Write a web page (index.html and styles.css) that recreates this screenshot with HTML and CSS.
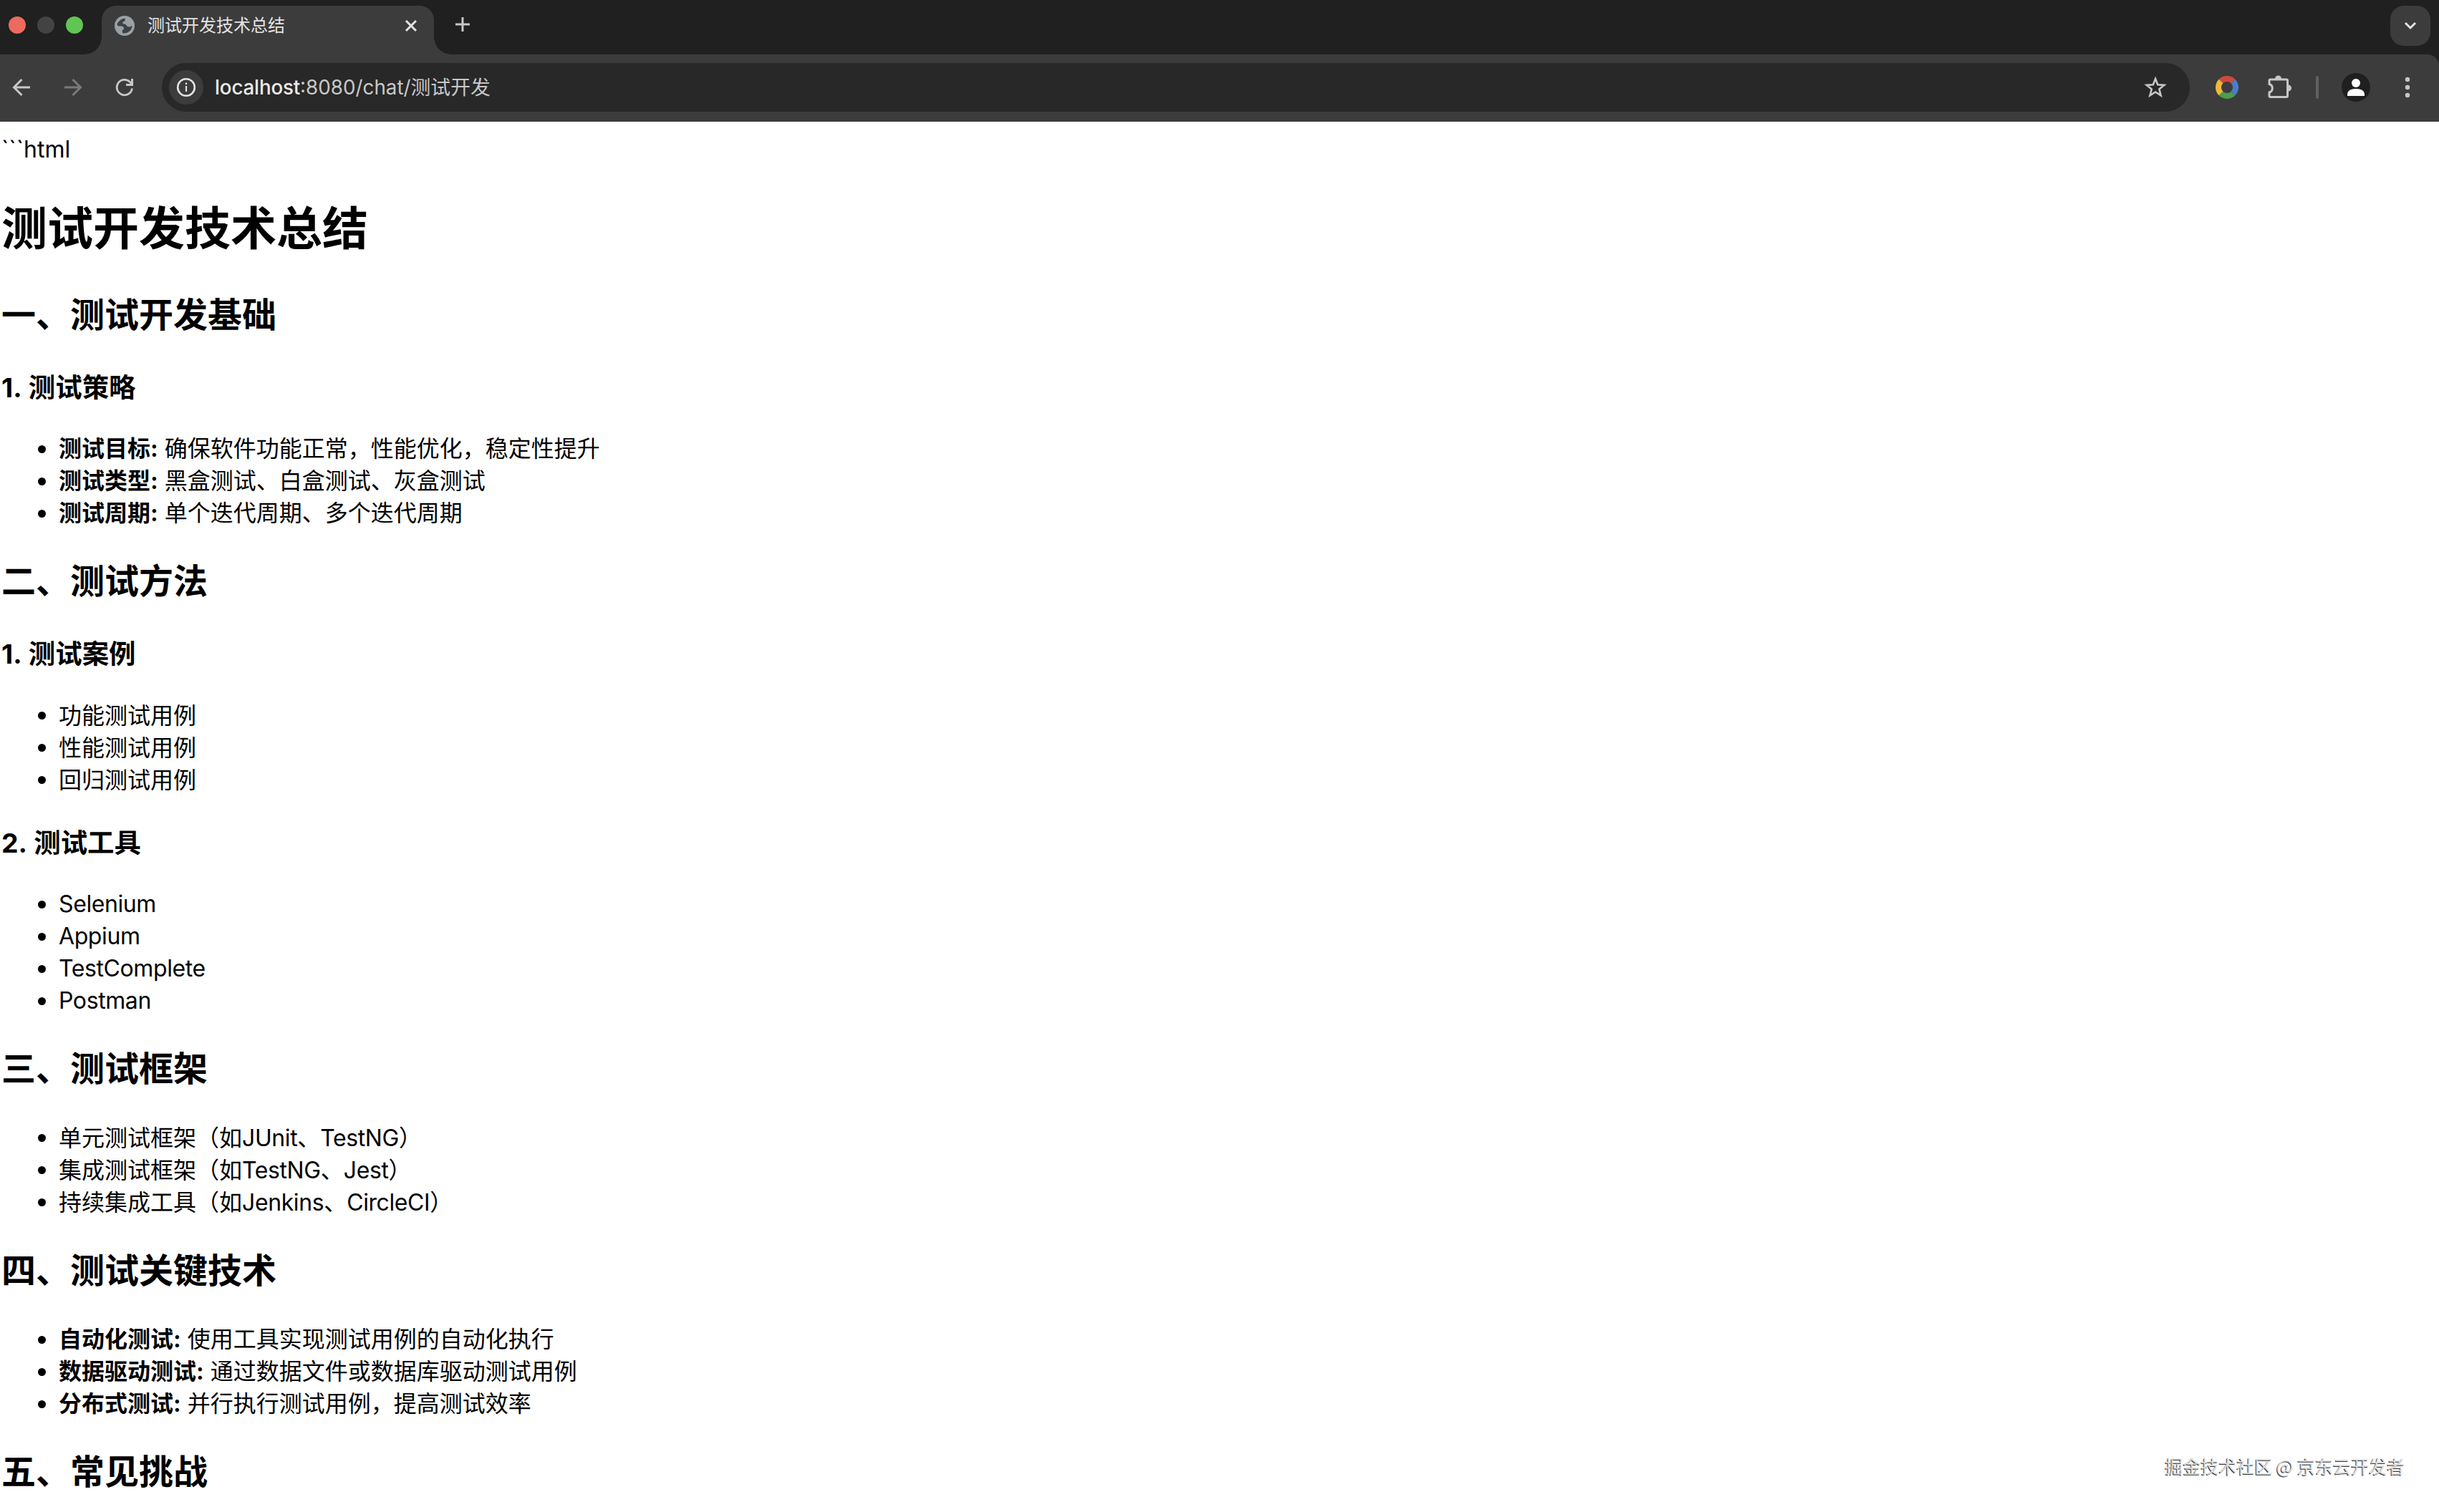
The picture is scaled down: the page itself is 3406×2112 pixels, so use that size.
FILE: index.html
```html
<!DOCTYPE html>
<html lang="zh-CN">
<head>
<meta charset="utf-8">
<title>测试开发技术总结</title>
<link rel="stylesheet" href="styles.css">
</head>
<body>
<div class="browser">
  <header class="tabstrip">
    <div class="lights"><i class="light red"></i><i class="light idle"></i><i class="light green"></i></div>
    <div class="tab">
      <svg class="favicon" width="28" height="28" viewBox="0 0 28 28"><circle cx="14" cy="14" r="14" fill="#9aa0a3"/><path d="M14 3.500Q8 4.500 4 10.500C3 13.500 4 14.500 8 14.500Q11.500 14 12.500 16Q14 19 11 20Q10 22 11.500 24.500Q17 25 21 21.500Q24.500 18 24.500 14L21 15.500Q17.500 16 16.500 13Q15 11.500 11.500 11Q10.500 9 13 8Q16 7 14 3.500Z" fill="#3a4348"/></svg>
      <span class="tab-title">测试开发技术总结</span>
      <svg class="close" width="18" height="18" viewBox="0 0 18 18"><path d="M2 2L16 16M16 2L2 16" stroke="#e3e3e3" stroke-width="3"/></svg>
    </div>
    <svg class="plus" width="22" height="22" viewBox="0 0 22 22"><path d="M11 1V21M1 11H21" stroke="#c7c7c7" stroke-width="3"/></svg>
    <div class="tab-search"><svg width="18" height="12" viewBox="0 0 18 12"><path d="M2 2L9 9L16 2" fill="none" stroke="#e3e3e3" stroke-width="3"/></svg></div>
  </header>
  <nav class="toolbar">
    <svg class="back" width="26" height="26" viewBox="0 0 26 26"><path d="M25 13H3M13.500 2L2.500 13L13.500 24" fill="none" stroke="#c7c7c7" stroke-width="3"/></svg>
    <svg class="forward" width="26" height="26" viewBox="0 0 26 26"><path d="M1 13H23M12.500 2L23.500 13L12.500 24" fill="none" stroke="#7b7b7b" stroke-width="3"/></svg>
    <svg class="reload" width="26" height="26" viewBox="0 0 26 26"><path d="M23.500 14.500A10.700 10.700 0 1 1 20.500 5.500L23 8" fill="none" stroke="#c7c7c7" stroke-width="2.800"/><path d="M23.500 1V9.500H15" fill="none" stroke="#c7c7c7" stroke-width="3"/></svg>
    <div class="omnibox">
      <span class="site-info"><svg width="28" height="28" viewBox="0 0 28 28"><circle cx="14" cy="14" r="11.800" fill="none" stroke="#e3e3e3" stroke-width="2.600"/><path d="M14 12V20M14 7.500V10" stroke="#e3e3e3" stroke-width="2.200"/></svg></span>
      <span class="url"><b class="host">localhost</b>:8080/chat/测试开发</span>
      <svg class="star" width="32" height="32" viewBox="0 0 32 32"><path d="M16 4L19.200 12.300L28.300 12.900L21.300 18.600L23.600 27.300L16 22.500L8.400 27.300L10.700 18.600L3.700 12.900L12.800 12.300Z" fill="none" stroke="#c7c7c7" stroke-width="2.600"/></svg>
    </div>
    <svg class="ring" width="32" height="32" viewBox="0 0 32 32" fill="none" stroke-width="8"><path d="M7.500 7.500A12 12 0 0 1 24.500 7.500" stroke="#d0493b"/><path d="M24.500 7.500A12 12 0 0 1 24.500 24.500" stroke="#4c7bc9"/><path d="M24.500 24.500A12 12 0 0 1 7.500 24.500" stroke="#4a9e4c"/><path d="M7.500 24.500A12 12 0 0 1 7.500 7.500" stroke="#ecb93c"/></svg>
    <svg class="puzzle" width="34" height="34" viewBox="0 0 34 34"><path d="M3.500 6H26A1.500 1.500 0 0 1 27.500 7.500V29A1.500 1.500 0 0 1 26 30.500H3.500A1.500 1.500 0 0 1 2 29V24A6 6 0 0 0 2 12.500V7.500A1.500 1.500 0 0 1 3.500 6Z" fill="none" stroke="#c7c7c7" stroke-width="3"/><path d="M10 5A4.500 4.500 0 0 1 19 5ZM28.500 13.500A4.500 4.500 0 0 1 28.500 22.500Z" fill="#c7c7c7"/></svg>
    <i class="divider"></i>
    <svg class="avatar" width="40" height="40" viewBox="0 0 40 40"><circle cx="20" cy="20" r="20" fill="#1f1f1f"/><circle cx="20" cy="14" r="6" fill="#fff"/><path d="M8 32V29Q9 22 20 22T32 29V32Z" fill="#fff"/></svg>
    <svg class="more" width="8" height="30" viewBox="0 0 8 30" fill="#c7c7c7"><circle cx="4" cy="4" r="3.200"/><circle cx="4" cy="15" r="3.200"/><circle cx="4" cy="26" r="3.200"/></svg>
  </nav>
</div>
<main class="page">
  <div class="fence">```html</div>
  <h1>测试开发技术总结</h1>
  <h2>一、测试开发基础</h2>
  <h3>1. 测试策略</h3>
  <ul>
    <li><strong>测试目标:</strong> 确保软件功能正常，性能优化，稳定性提升</li>
    <li><strong>测试类型:</strong> 黑盒测试、白盒测试、灰盒测试</li>
    <li><strong>测试周期:</strong> 单个迭代周期、多个迭代周期</li>
  </ul>
  <h2>二、测试方法</h2>
  <h3>1. 测试案例</h3>
  <ul>
    <li>功能测试用例</li>
    <li>性能测试用例</li>
    <li>回归测试用例</li>
  </ul>
  <h3>2. 测试工具</h3>
  <ul>
    <li><span class="latin">Selenium</span></li>
    <li><span class="latin">Appium</span></li>
    <li><span class="latin">TestComplete</span></li>
    <li><span class="latin">Postman</span></li>
  </ul>
  <h2>三、测试框架</h2>
  <ul>
    <li>单元测试框架（如<span class="latin">JUnit</span>、<span class="latin">TestNG</span>）</li>
    <li>集成测试框架（如<span class="latin">TestNG</span>、<span class="latin">Jest</span>）</li>
    <li>持续集成工具（如<span class="latin">Jenkins</span>、<span class="latin">CircleCI</span>）</li>
  </ul>
  <h2>四、测试关键技术</h2>
  <ul>
    <li><strong>自动化测试:</strong> 使用工具实现测试用例的自动化执行</li>
    <li><strong>数据驱动测试:</strong> 通过数据文件或数据库驱动测试用例</li>
    <li><strong>分布式测试:</strong> 并行执行测试用例，提高测试效率</li>
  </ul>
  <h2>五、常见挑战</h2>
</main>
<div class="watermark">掘金技术社区 @ 京东云开发者</div>
</body>
</html>
```
FILE: styles.css
```css
* { box-sizing: border-box; }
html, body { height: 2112px; overflow: hidden; }
body {
  margin: 0;
  position: relative;
  background: #fff;
  color: #000;
  font-family: Inter, "Noto Sans CJK SC", sans-serif;
  font-size: 32px;
  line-height: 45px;
}
svg { display: block; flex: none; }

.browser { height: 170px; background: #202020; }
.tabstrip { display: flex; height: 76px; padding: 8px 12px 0; }
.lights { display: flex; gap: 16px; padding-top: 15px; width: 130px; }
.light { width: 24px; height: 24px; border-radius: 50%; }
.red { background: #ed6a5e; }
.idle { background: #434343; }
.green { background: #61c554; }
.tab {
  position: relative;
  display: flex;
  width: 464px;
  height: 68px;
  padding: 0 23px 12px 18px;
  align-items: center;
  background: #3c3c3c;
  border-radius: 20px 20px 0 0;
}
.tab::before, .tab::after {
  content: "";
  position: absolute;
  bottom: 0;
  width: 24px;
  height: 24px;
}
.tab::before { right: 100%; background: radial-gradient(circle at 0 0, #202020 23.5px, #3c3c3c 24px); }
.tab::after { left: 100%; background: radial-gradient(circle at 100% 0, #202020 23.5px, #3c3c3c 24px); }
.tab-title { margin-left: 18px; color: #e3e3e3; font-size: 24px; line-height: 34px; }
.close { margin-left: auto; }
.plus { margin: 15px 0 0 29px; }
.tab-search {
  display: flex;
  align-items: center;
  justify-content: center;
  width: 56px;
  height: 56px;
  margin-left: auto;
  border-radius: 19px;
  background: #3c3c3c;
}
.toolbar {
  display: flex;
  align-items: center;
  height: 94px;
  padding: 0 40px 2px 17px;
  background: #3c3c3c;
  border-top-right-radius: 16px;
}
.forward { margin-left: 46px; }
.reload { margin-left: 46px; }
.omnibox {
  display: flex;
  align-items: center;
  width: 2832px;
  height: 68px;
  margin-left: 39px;
  padding: 0 32px 0 10px;
  border-radius: 34px;
  background: #282828;
}
.site-info {
  display: flex;
  align-items: center;
  justify-content: center;
  width: 48px;
  height: 48px;
  border-radius: 50%;
  background: #3c3c3c;
}
.url { margin-left: 16px; color: #c7c7c7; font-size: 27.8px; line-height: 40px; }
.host { color: #e9e9e9; font-weight: 500; letter-spacing: -0.2px; }
.star { margin-left: auto; }
.ring { margin-left: 36px; }
.puzzle { margin-left: 41px; }
.divider { width: 4px; height: 32px; margin-left: 33px; border-radius: 2px; background: #606060; }
.avatar { margin-left: 32px; }
.more { margin-left: auto; }

.page { padding: 16px 0 0 2px; }
h1 { margin: 43px 0; font-size: 64px; line-height: 90px; }
h2 { margin: 40px 0; font-size: 48px; line-height: 66.5px; }
h3 { margin: 39px 0 36.8px; font-size: 37.44px; line-height: 53px; word-spacing: 1.5px; }
h2 + h3 { margin-top: 41px; }
ul { margin: 32px 0; padding-left: 80px; list-style: none; }
li::before {
  content: "";
  display: inline-block;
  width: 11px;
  height: 11px;
  margin: 0 18px 0 -29px;
  border-radius: 50%;
  background: #000;
  vertical-align: 5.5px;
}
.latin { letter-spacing: -0.4px; }

.watermark {
  position: absolute;
  right: 48px;
  bottom: 47px;
  color: #ddd;
  font: 25px/36px "Noto Sans CJK SC", sans-serif;
  text-shadow: -1px 1px 0 #333;
}
```
